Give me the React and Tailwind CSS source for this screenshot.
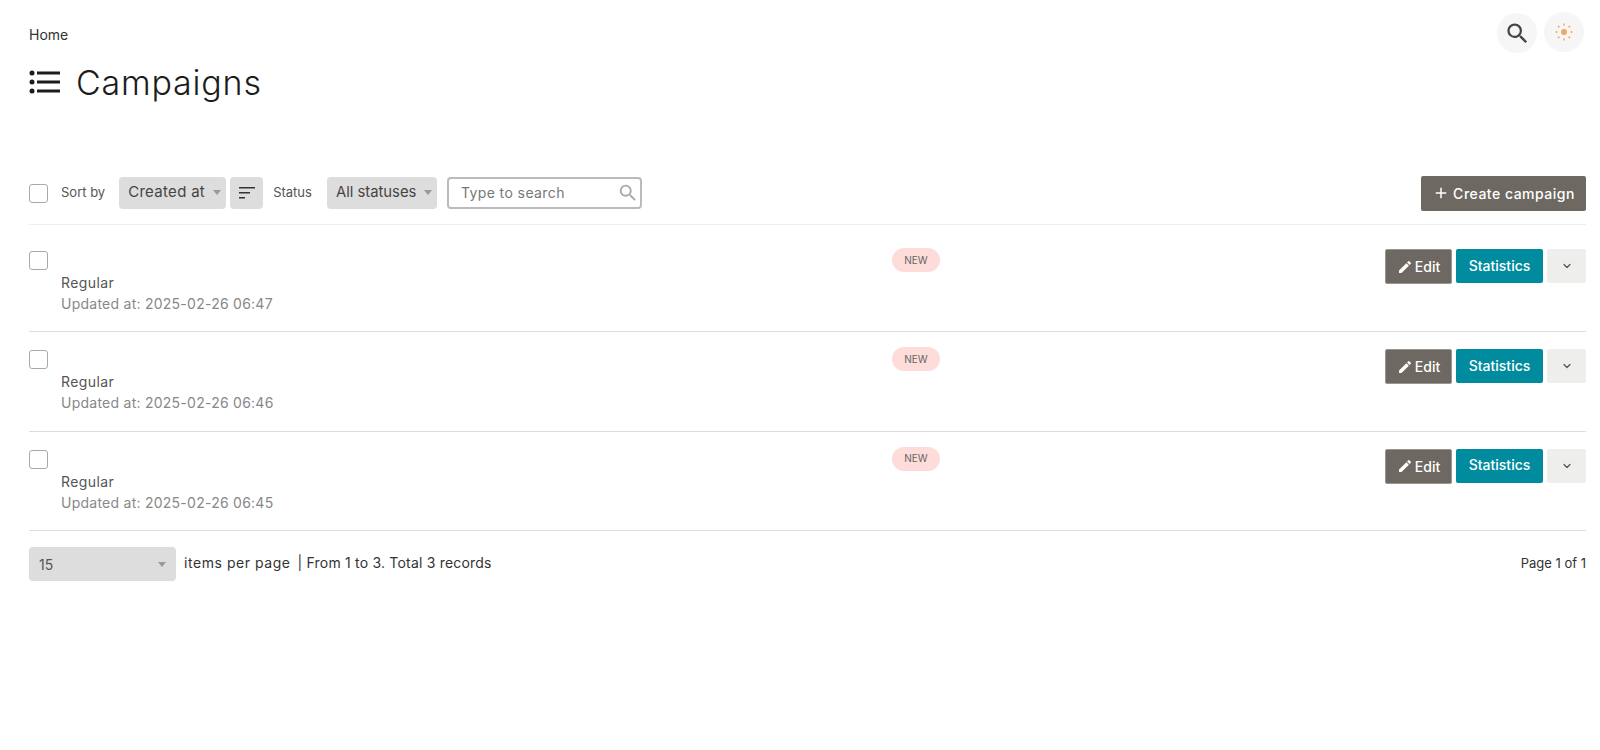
import { ChevronDown } from "lucide-react";
import { MdEdit, MdSearch, MdAdd } from "react-icons/md";

const campaigns = ["06:47", "06:46", "06:45"];

function Caret() {
    return <span className="ml-2 h-0 w-0 border-x-[4px] border-t-[5px] border-x-transparent border-t-[#999999]" />;
}

function Checkbox() {
    return <span className="block h-[19px] w-[19px] shrink-0 rounded-[3px] border border-[#aaaaaa] bg-white" />;
}

function CampaignRow({ time, first }) {
    return (
        <div className={`flex justify-between border-b border-[#dddddd] ${first ? "h-[107px] pt-[26px]" : "h-[99.5px] pt-[18px]"}`}>
            <div className="w-[863px] shrink-0">
                <Checkbox />
                <div className="mt-[2px] pl-[32px] text-[14px] leading-[21px] tracking-[0.4px] text-[#555555]">Regular</div>
                <div className="pl-[32px] text-[14px] leading-[21px] tracking-[0.25px] text-[#888888]">Updated at: 2025-02-26 {time}</div>
            </div>
            <div className="flex-1">
                <span className="-mt-[3px] flex h-[24px] w-[48px] items-center justify-center rounded-full bg-[#fddcda] text-[10px] text-[#666666]">NEW</span>
            </div>
            <div className={`flex h-[35px] gap-1 ${first ? "-mt-[2px]" : "-mt-[1px]"}`}>
                <button className="flex w-[67px] items-center justify-center gap-[2px] rounded-[2px] border border-[#999590] bg-[#6d6862] text-[14px] font-medium text-white">
                    <MdEdit size={16} />
                    Edit
                </button>
                <button className="h-[34px] w-[87px] rounded-[2px] bg-[#008c9e] pb-[2px] text-[14px] font-medium text-white">Statistics</button>
                <button className="flex h-[34px] w-[39px] items-center justify-center rounded-[2px] bg-[#eeeeec] text-[#555555]">
                    <ChevronDown size={12} strokeWidth={2.5} />
                </button>
            </div>
        </div>
    );
}

export default function App() {
    return (
        <div className="relative h-[750px] bg-white pl-[29px] pr-[14px] font-['Inter',sans-serif] text-[#222222]">
            <div className="absolute right-[16px] top-[13px] flex gap-[7px]">
                <div className="flex h-[40px] w-[40px] items-center justify-center rounded-full bg-[#f6f6f6]">
                    <MdSearch size={27} className="text-[#444444]" />
                </div>
                <div className="-mt-[1px] flex h-[40px] w-[40px] items-center justify-center rounded-full bg-[#f6f6f6]">
                    <svg width="18" height="18" viewBox="0 0 18 18" stroke="#f0a860" strokeWidth="1.5" fill="none">
                        <circle cx="9" cy="9" r="3" fill="#f0a860" stroke="none" />
                        <path d="M9 0.5v2M9 15.5v2M0.5 9h2M15.5 9h2M3 3l1.4 1.4M13.6 13.6L15 15M3 15l1.4-1.4M13.6 4.4L15 3" />
                    </svg>
                </div>
            </div>

            <div className="pt-[27px] text-[14px] leading-[16px] text-[#333333]">Home</div>

            <div className="mt-[19px] flex h-[40px] items-center">
                <svg width="31" height="24" viewBox="0 0 31 24" fill="#1c1c1c">
                    <circle cx="3" cy="3" r="2.5" />
                    <circle cx="3" cy="12" r="2.5" />
                    <circle cx="3" cy="21" r="2.5" />
                    <rect x="8" y="1.5" width="23" height="3" />
                    <rect x="8" y="10.5" width="23" height="3" />
                    <rect x="8" y="19.5" width="23" height="3" />
                </svg>
                <h1 className="ml-[16px] text-[34px] font-light tracking-[0.8px] text-[#1c1c1c]">Campaigns</h1>
            </div>

            <div className="mt-[74px] flex h-[34px] items-center">
                <Checkbox />
                <span className="ml-[13px] text-[13px] text-[#555555]">Sort by</span>
                <div className="ml-[14px] flex h-[32px] w-[107px] items-center rounded-[4px] bg-[#dddddd] pb-[2px] pl-[9px] text-[15px] tracking-[0.3px] text-[#444444]">
                    Created at
                    <Caret />
                </div>
                <div className="ml-[4px] flex h-[32px] w-[33px] items-center justify-center rounded-[4px] bg-[#dddddd]">
                    <svg width="16" height="12" viewBox="0 0 16 12" fill="#333333">
                        <rect width="16" height="1.5" />
                        <rect y="5" width="11" height="1.5" />
                        <rect y="10" width="6" height="1.5" />
                    </svg>
                </div>
                <span className="ml-[10px] text-[13px] text-[#555555]">Status</span>
                <div className="ml-[15px] flex h-[32px] w-[110px] items-center rounded-[4px] bg-[#dddddd] pb-[2px] pl-[9px] text-[14.8px] text-[#444444]">
                    All statuses
                    <Caret />
                </div>
                <div className="ml-[10px] flex h-[32px] w-[195px] items-center justify-between rounded-[4px] border-2 border-[#bbbbbb] pb-[1px] pl-[12px] pr-[1px] text-[14px] tracking-[0.4px] text-[#777777]">
                    Type to search
                    <MdSearch size={22} className="text-[#aaaaaa]" />
                </div>
                <button className="ml-auto flex h-[35px] w-[165px] items-center justify-center gap-[3px] rounded-[2px] bg-[#6d6862] text-[14px] font-medium tracking-[0.5px] text-white">
                    <MdAdd size={18} />
                    Create campaign
                </button>
            </div>

            <div className="mt-[14px] border-t border-[#eeeeee]">
                {campaigns.map((time, i) => (
                    <CampaignRow key={time} time={time} first={i === 0} />
                ))}
            </div>

            <div className="mt-[16px] flex items-center text-[14px] text-[#333333]">
                <div className="flex h-[34px] w-[147px] items-center justify-between rounded-[4px] bg-[#dddddd] pl-[10px] pr-[10px] text-[#555555]">
                    15
                    <Caret />
                </div>
                <span className="-mt-[4px] ml-[8px] tracking-[0.55px]">items per page</span>
                <span className="-mt-[4px] ml-[7px] tracking-[0.2px]">| From 1 to 3. Total 3 records</span>
                <span className="-mt-[1px] ml-auto text-[13px]">Page 1 of 1</span>
            </div>
        </div>
    );
}
